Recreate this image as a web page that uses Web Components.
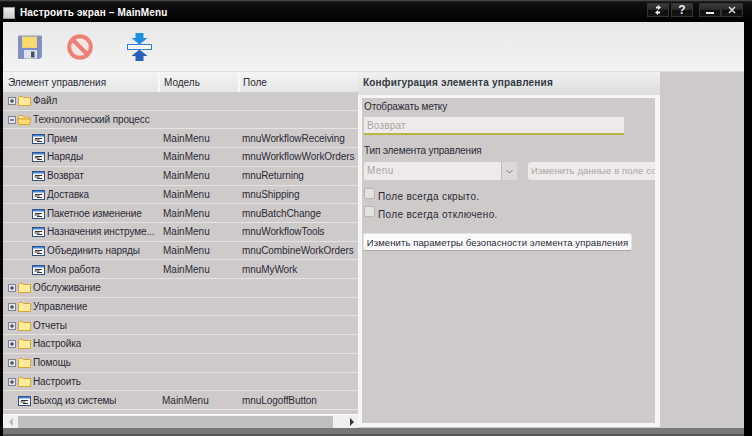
<!DOCTYPE html>
<html><head><meta charset="utf-8">
<style>
html,body{margin:0;padding:0;height:100%;background:#000}
body{width:752px;height:436px;overflow:hidden;font:10px "Liberation Sans",sans-serif;color:#222}
</style></head><body>
<x-window></x-window>
<script>
const def=(n,css,html,init)=>customElements.define(n,class extends HTMLElement{connectedCallback(){if(this.shadowRoot)return;const s=this.attachShadow({mode:'open'});s.innerHTML='<style>'+css+'</style>'+(typeof html==='function'?html(this):html);init&&init(this,s)}});
const FONT='"Liberation Sans",sans-serif';
def('x-winbtn',`:host{display:flex;width:22px;height:14px;align-items:center;justify-content:center;background:linear-gradient(#3c3c3c,#2a2a2a 45%,#0c0c0c 55%,#161616);border:1px solid #333;box-sizing:border-box;color:#eee;font:bold 12px ${FONT}}`,`<slot></slot>`);
def('x-titlebar',`:host{display:flex;align-items:flex-start;height:22px;background:linear-gradient(#555 0,#111 2px,#000 100%);padding:3px 9px 0 3px;box-sizing:border-box;color:#fff}
.chk{width:12px;height:12px;margin:4px 5px 0 0;background:linear-gradient(#eee,#ccc);border:1px solid #999;box-sizing:border-box}
.t{font:bold 10px/20px ${FONT};letter-spacing:.15px;flex:1}
.g{display:flex;gap:2px}.g+.g{margin-left:6px}.g2{gap:0}`,
`<div class="chk"></div><div class="t">Настроить экран – MainMenu</div>
<div class="g"><x-winbtn><svg width="10" height="10" viewBox="0 0 10 10" fill="#eee"><path d="M5 0l3 2.500L5 5V3.500H3v-2h2zM5 10L2 7.500 5 5v1.500h2v2H5z"/></svg></x-winbtn><x-winbtn>?</x-winbtn></div>
<div class="g g2"><x-winbtn><svg width="10" height="10"><rect x="1" y="7" width="8" height="2" fill="#eee"/></svg></x-winbtn><x-winbtn><svg width="8" height="8" stroke="#ddd" stroke-width="1.500"><path d="M1 1l6 6M7 1L1 7"/></svg></x-winbtn></div>`);
def('x-toolbar',`:host{display:flex;align-items:center;height:50px;box-sizing:border-box;padding:0 0 0 15px;background:linear-gradient(#e8e8e8,#f3f3f3);border-bottom:1px solid #ddd}
svg{display:block}`,
`<svg width="24" height="24" viewBox="0 0 24 24"><path d="M.5 1h23v21l-2 1.500H.5z" fill="#7d8fc4" stroke="#8a96b8"/><rect x="4.500" y="2" width="14" height="10.500" fill="#fbd96a" stroke="#ecd27a"/><rect x="6" y="15" width="13" height="8.500" fill="#dfe2ea"/><rect x="13" y="16.500" width="3.500" height="6" fill="#4a4f68"/></svg>
<svg width="26" height="26" viewBox="0 0 26 26" style="margin-left:25px"><circle cx="13" cy="13" r="10.800" fill="#f3e6e2" stroke="#ee7f74" stroke-width="4"/><path d="M5.500 5.500l15 15" stroke="#ee7f74" stroke-width="4"/></svg>
<svg width="25" height="28" viewBox="0 0 25 28" style="margin-left:34px"><path d="M8.500 0h8v5h4l-8 6.500-8-6.500h4z" fill="#1d8fe6"/><rect x=".5" y="11.500" width="24" height="5" fill="#fff" stroke="#2e7cd0"/><path d="M12.500 16.500l8 6.500h-4v5h-8v-5h-4z" fill="#2a5fc0"/></svg>`);
const PLUS=`<svg class="pm" width="8" height="8"><rect x=".5" y=".5" width="7" height="7" fill="#e6e6ee" stroke="#7c8296"/><path d="M2 4h4M4 2v4" stroke="#223"/></svg>`;
const MINUS=`<svg class="pm" width="8" height="8"><rect x=".5" y=".5" width="7" height="7" fill="#e6e6ee" stroke="#7c8296"/><path d="M2 4h4" stroke="#223"/></svg>`;
const FOLDER=`<svg class="f" width="13" height="10" viewBox="0 0 13 10"><path d="M.5 1.500l1-1h3l1 1h7v8H.5z" fill="#fdeb9a" stroke="#d9a531"/></svg>`;
const OPEN=`<svg class="o" width="15" height="10" viewBox="0 0 15 10"><path d="M1.500 2l1-1.500h3l1 1.500h6v2h-11z" fill="#fdeb9a" stroke="#d9a531"/><path d="M.5 4h13.500l-1.500 5.500h-11z" fill="#fbdc72" stroke="#d9a531"/></svg>`;
const FORM=`<svg class="i" width="13" height="10" viewBox="0 0 13 10"><rect x=".5" y=".5" width="12" height="9" fill="#fff" stroke="#33518a"/><rect x="1" y="1" width="11" height="1.500" fill="#3f86d8"/><path d="M3 4.500h7M2.500 6h5M5 7.500h5" stroke="#333"/></svg>`;
def('x-row',`:host{display:flex;flex:1 1 0;min-height:0;align-items:center;padding-top:1px;border-bottom:1px solid #e6e3e3;box-sizing:border-box;white-space:nowrap;color:#2a2a36;font:10px/14px ${FONT}}
.a{width:160px;display:flex;align-items:center;box-sizing:border-box;flex:none;overflow:hidden;letter-spacing:-.12px}
.b{width:79px;flex:none}.c{flex:1;letter-spacing:-.08px}
:host([k=g]) .a{padding-left:5px}
:host([k=c]) .a{padding-left:29px}
:host([k=l]) .a{padding-left:15px}
:host([k=l]) .b{margin-left:-1px;width:80px}
.pm{margin-right:2px;flex:none}.f{margin-right:2px;flex:none}.o{margin:0 1px 0 -1px;flex:none}.i{margin-right:2px;flex:none}
.x{overflow:hidden;text-overflow:ellipsis}`,
h=>{const k=h.getAttribute('k');const ic=k==='g'?(h.hasAttribute('open')?MINUS+OPEN:PLUS+FOLDER):FORM;
return `<div class="a">${ic}<span class="x"><slot></slot></span></div><div class="b">${h.getAttribute('m')||''}</div><div class="c">${h.getAttribute('f')||''}</div>`});
def('x-tablehead',`:host{display:flex;height:20px;flex:none;box-sizing:border-box;background:linear-gradient(#f4f4f4,#e6e6e6);font:10px/22px ${FONT};color:#2a2a36}
div{box-sizing:border-box;padding-left:5px;border-right:2px solid #f8f8f8}
.a{width:157px}.b{width:80px;padding-left:4px}.c{flex:1;border:0;padding-left:3px}`,`<div class="a">Элемент управления</div><div class="b">Модель</div><div class="c">Поле</div>`);
def('x-scrollbar',`:host{display:flex;align-items:center;height:14px;flex:none;background:#f0f0f0;border-top:1px solid #fff;box-sizing:border-box}
.th{flex:1;height:12px;background:#c0c0c0;margin:0 17px 0 4px}
.l,.r{width:0;height:0;border:4px solid transparent}
.l{border-right-color:#bbb;border-left:0;margin-left:6px;margin-right:1px}
.r{border-left-color:#333;border-right:0;margin-right:4px}`,`<i class="l"></i><div class="th"></div><i class="r"></i>`);
def('x-tree',`:host{display:flex;flex-direction:column;width:355px;flex:none;background:#cfcaca}
.rows{display:flex;flex-direction:column;min-height:0;height:318px;flex:none}
.gap{height:4px;flex:none}`,`<x-tablehead></x-tablehead><div class="rows"><slot></slot></div><div class="gap"></div><x-scrollbar></x-scrollbar>`);
def('x-check',`:host{display:flex;align-items:center;height:18px;font:10px ${FONT};letter-spacing:.35px;color:#2a2a36}
i{width:9px;height:9px;margin:-5px 3px 0 0;border-radius:2px;background:#e4e1e1;border:1px solid #b9b6b6;box-sizing:content-box;flex:none}`,`<i></i><slot></slot>`);
def('x-config',`:host{display:flex;flex-direction:column;width:302px;flex:none;box-sizing:border-box;background:#f6f6f6;padding-bottom:4px;margin-bottom:1px;color:#2a2a36}
.h{height:23px;flex:none;background:linear-gradient(#f0f0f0,#dcdcdc);font:bold 10px/20px ${FONT};letter-spacing:.2px;padding-left:5px;color:#333a44;border-top:1px solid #eee;box-sizing:border-box}
.p{flex:1;background:#cfcaca;margin:3px 5px 0 4px;padding:2px 0 0 2px;overflow:hidden;font:10px/14px ${FONT};letter-spacing:-.15px}
.in{width:260px;height:18px;box-sizing:border-box;margin:3px 0 9px;padding-left:3px;background:#eeeaea;border-bottom:2px solid #b9b63f;color:#a9a6a6;font:10px/17px ${FONT};letter-spacing:.2px}
.r{display:flex;margin:4px 0 7px;width:310px;flex:none}
.sel{width:153px;height:18px;display:flex;box-sizing:border-box;background:#eeeaea;color:#a9a6a6;line-height:18px;padding-left:3px;justify-content:space-between;flex:none;border-radius:2px 0 0 2px;letter-spacing:.4px}
.ar{width:15px;background:#dcd9d9;display:flex;align-items:center;justify-content:center;border-left:1px solid #bbb}
.tb{margin-left:11px;width:160px;flex:none;height:18px;background:#eeeaea;border-radius:3px;color:#a9a6a6;line-height:18px;padding-left:3px;white-space:nowrap;box-sizing:border-box;letter-spacing:.1px;font-size:9.500px}
.btn{display:block;margin:10px 0 0 -1px;height:18px;width:269px;text-align:center;box-sizing:border-box;background:#fbfbfb;border-radius:3px;border:1px solid #e4e4e4;border-bottom-color:#aaa;line-height:17px;white-space:nowrap;letter-spacing:.1px;font-size:9.500px}`,
`<div class="h">Конфигурация элемента управления</div><div class="p">
<div>Отображать метку</div><div class="in">Возврат</div>
<div>Тип элемента управления</div>
<div class="r"><div class="sel">Menu<div class="ar"><svg width="7" height="5" fill="none" stroke="#777"><path d="M.5 1l3 3 3-3"/></svg></div></div><div class="tb">Изменить данные в поле со списком</div></div>
<x-check>Поле всегда скрыто.</x-check><x-check>Поле всегда отключено.</x-check>
<div class="btn">Изменить параметры безопасности элемента управления</div></div>`);
def('x-main',`:host{display:flex;flex:1;min-height:0;background:#cfcaca}`,`<slot></slot>`);
const rows=[['g','Файл'],['g','Технологический процесс','','',1],
['c','Прием','MainMenu','mnuWorkflowReceiving'],['c','Наряды','MainMenu','mnuWorkflowWorkOrders'],['c','Возврат','MainMenu','mnuReturning'],['c','Доставка','MainMenu','mnuShipping'],['c','Пакетное изменение','MainMenu','mnuBatchChange'],['c','Назначения инструме...','MainMenu','mnuWorkflowTools'],['c','Объединить наряды','MainMenu','mnuCombineWorkOrders'],['c','Моя работа','MainMenu','mnuMyWork'],
['g','Обслуживание'],['g','Управление'],['g','Отчеты'],['g','Настройка'],['g','Помощь'],['g','Настроить'],['l','Выход из системы','MainMenu','mnuLogoffButton']];
const rh=rows.map(r=>`<x-row k="${r[0]}" m="${r[2]||''}" f="${r[3]||''}"${r[4]?' open':''}>${r[1]}</x-row>`).join('');
def('x-window',`:host{display:flex;flex-direction:column;width:752px;height:436px;background:#000}
.body{display:flex;flex:1;min-height:0;padding:0 8px 0 3px;flex-direction:column}
.foot{height:8px;flex:none;background:linear-gradient(#777 0 6px,#555 6px);margin:0 8px 0 3px}`,
`<x-titlebar></x-titlebar><div class="body"><x-toolbar></x-toolbar><x-main><x-tree>${rh}</x-tree><x-config></x-config></x-main></div><div class="foot"></div>`);
</script>
</body></html>
